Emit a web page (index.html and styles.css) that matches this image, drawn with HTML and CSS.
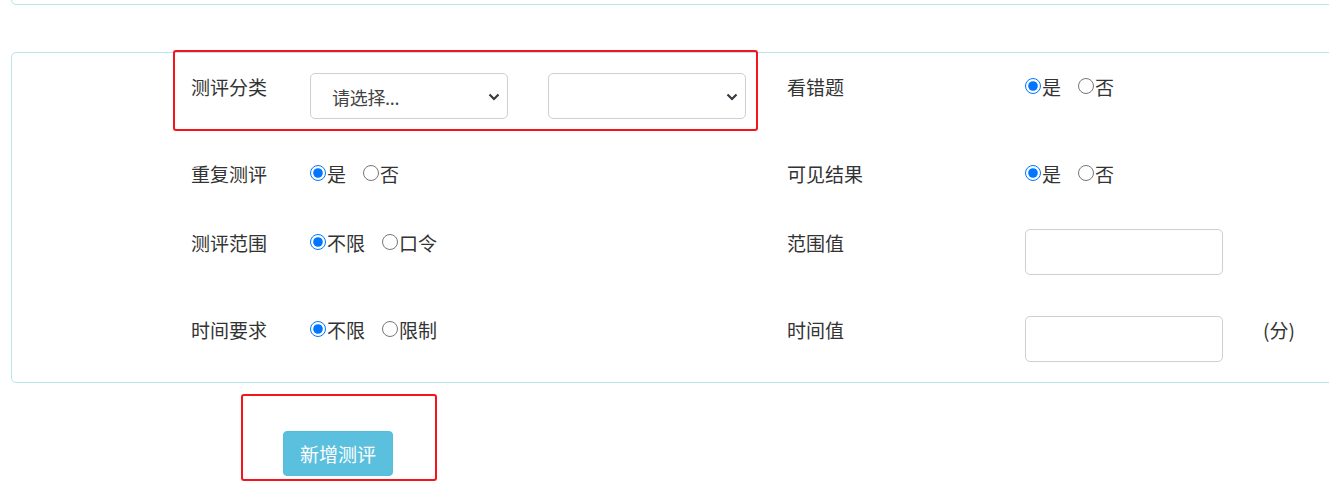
FILE: index.html
```html
<!DOCTYPE html>
<html lang="zh-CN">
<head>
  <meta charset="UTF-8" />
  <meta name="viewport" content="width=device-width, initial-scale=1" />
  <title>新增测评</title>
  <link rel="stylesheet" href="styles.css">
</head>
<body>
  <div class="panel panel-top"></div>

  <form class="panel setting">
    <div class="row">
      <div class="field mark">
        <label class="field-label">测评分类</label>
        <div class="select-wrap">
          <select class="select"><option>请选择...</option></select>
          <svg class="chevron" viewBox="0 0 12 8"><polyline points="1.5,1.5 6,6 10.5,1.5" /></svg>
        </div>
        <div class="select-wrap">
          <select class="select"><option></option></select>
          <svg class="chevron" viewBox="0 0 12 8"><polyline points="1.5,1.5 6,6 10.5,1.5" /></svg>
        </div>
      </div>
      <div class="field field-right">
        <label class="field-label">看错题</label>
        <div class="options">
          <label class="option"><input type="radio" name="wrong" checked>是</label>
          <label class="option"><input type="radio" name="wrong">否</label>
        </div>
      </div>
    </div>

    <div class="row">
      <div class="field">
        <label class="field-label">重复测评</label>
        <div class="options">
          <label class="option"><input type="radio" name="repeat" checked>是</label>
          <label class="option"><input type="radio" name="repeat">否</label>
        </div>
      </div>
      <div class="field field-right">
        <label class="field-label">可见结果</label>
        <div class="options">
          <label class="option"><input type="radio" name="result" checked>是</label>
          <label class="option"><input type="radio" name="result">否</label>
        </div>
      </div>
    </div>

    <div class="row">
      <div class="field">
        <label class="field-label">测评范围</label>
        <div class="options">
          <label class="option"><input type="radio" name="range" checked>不限</label>
          <label class="option"><input type="radio" name="range">口令</label>
        </div>
      </div>
      <div class="field field-right">
        <label class="field-label">范围值</label>
        <input class="text-input" type="text">
      </div>
    </div>

    <div class="row">
      <div class="field">
        <label class="field-label">时间要求</label>
        <div class="options">
          <label class="option"><input type="radio" name="time" checked>不限</label>
          <label class="option"><input type="radio" name="time">限制</label>
        </div>
      </div>
      <div class="field field-right">
        <label class="field-label">时间值</label>
        <input class="text-input" type="text">
        <span class="unit">(分)</span>
      </div>
    </div>
  </form>

  <div class="submit-box">
    <button class="btn-info" type="button">新增测评</button>
  </div>
</body>
</html>
```

FILE: styles.css
```css
body {
  margin: 0;
  background: #fff;
  color: #333;
  font-family: "Noto Sans CJK SC", "Noto Sans", sans-serif;
  overflow: hidden;
}
.panel {
  margin-left: 11px;
  width: 1340px;
  border: 1px solid #b8e4ec;
  border-radius: 5px;
  box-sizing: border-box;
  background: #fff;
}
.panel-top {
  margin-top: -40px;
  height: 45px;
}
.setting {
  margin-top: 47px;
  padding: 20px 0 20px 179px;
  display: flex;
  flex-direction: column;
  gap: 41px;
}
.row {
  display: flex;
  align-items: flex-start;
}
.field {
  display: flex;
  align-items: flex-start;
  width: 596px;
  flex-shrink: 0;
}
.field-right {
  width: auto;
}
.field-label {
  width: 119px;
  flex-shrink: 0;
  font-size: 19px;
  line-height: 28px;
}
.field-right .field-label {
  width: 238px;
}

/* red highlight round the category group */
.mark {
  position: relative;
}
.mark::after {
  content: "";
  position: absolute;
  top: -23px;
  right: 29px;
  bottom: -12px;
  left: -18px;
  border: 2px solid #f5141a;
  border-radius: 3px;
  pointer-events: none;
}

.select-wrap {
  position: relative;
  margin-right: 40px;
}
.select-wrap:last-child {
  margin-right: 0;
}
.select {
  appearance: none;
  -webkit-appearance: none;
  display: block;
  width: 198px;
  height: 46px;
  margin: 0;
  padding: 2px 30px 0 21px;
  border: 1px solid #cfcfcf;
  border-radius: 5px;
  background: #fff;
  color: #444;
  font-family: inherit;
  font-size: 18px;
  letter-spacing: -0.3px;
}
.chevron {
  position: absolute;
  right: 8px;
  top: 20px;
  width: 12px;
  height: 8px;
  fill: none;
  stroke: #343a40;
  stroke-width: 2.2;
  pointer-events: none;
}

.options {
  display: flex;
  height: 28px;
  align-items: center;
}
.option {
  display: inline-flex;
  align-items: center;
  margin-right: 17px;
  font-size: 19px;
  line-height: 28px;
}
.option input {
  width: 16px;
  height: 16px;
  margin: 0 1px 2px 0;
}

.text-input {
  width: 198px;
  height: 46px;
  margin: 0;
  padding: 0 10px;
  box-sizing: border-box;
  border: 1px solid #cfcfcf;
  border-radius: 5px;
  font-size: 17px;
}
.unit {
  margin-left: 40px;
  font-size: 19px;
  line-height: 28px;
}

.submit-box {
  margin: 11px 0 0 241px;
  width: 196px;
  height: 87px;
  padding: 35px 0 0 40px;
  box-sizing: border-box;
  border: 2px solid #f5141a;
  border-radius: 3px;
}
.btn-info {
  display: block;
  width: 110px;
  height: 45px;
  padding: 0;
  background: #5bc0de;
  border: 1px solid #56bcdb;
  border-radius: 4px;
  color: #fff;
  font-family: inherit;
  font-size: 19px;
  cursor: pointer;
}
```
